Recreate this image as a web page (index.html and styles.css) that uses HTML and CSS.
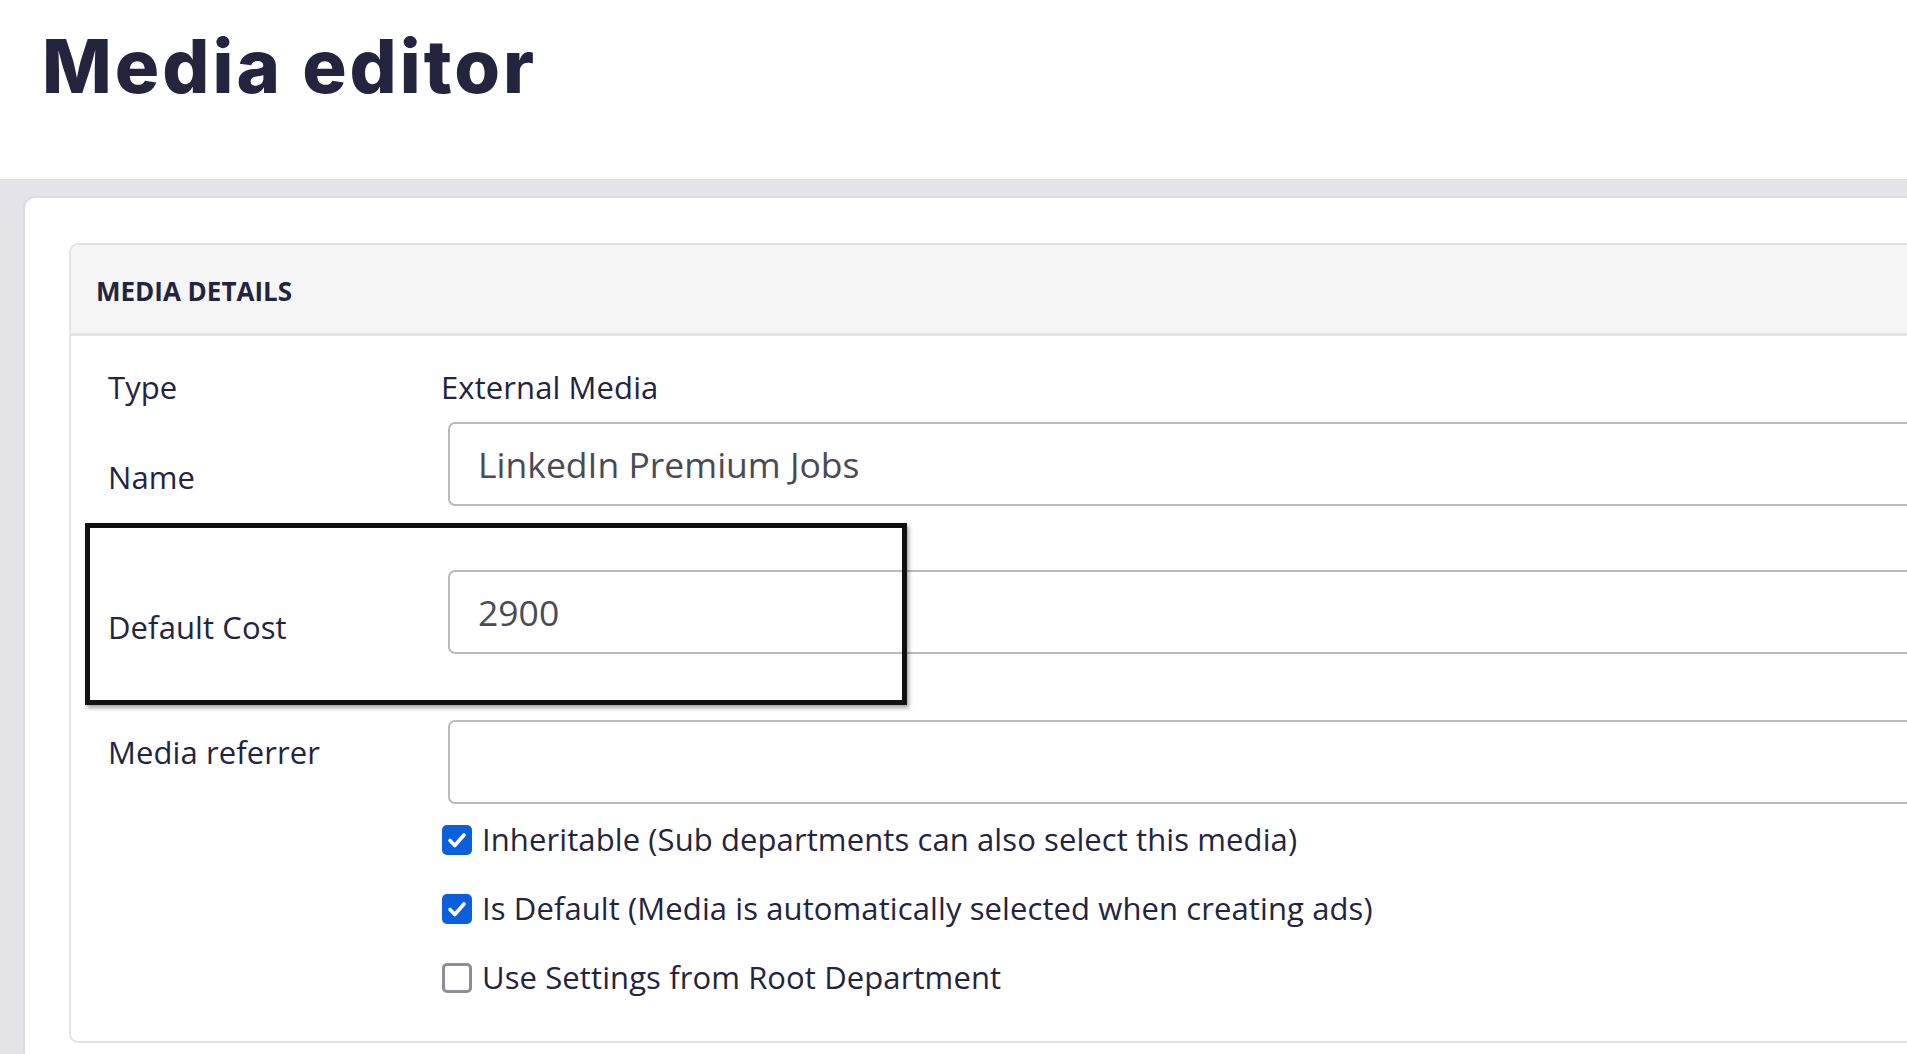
FILE: index.html
```html
<!DOCTYPE html>
<html lang="en">
<head>
<meta charset="utf-8">
<title>Media editor</title>
<link rel="stylesheet" href="styles.css">
</head>
<body>
<header class="page-header">
  <h1 class="page-title">Media editor</h1>
</header>
<main class="page-body">
  <section class="card">
    <div class="panel">
      <div class="panel-header">
        <h2 class="panel-title">MEDIA DETAILS</h2>
      </div>
      <div class="panel-body">
        <div class="form-row row-type">
          <span class="label">Type</span>
          <span class="value">External Media</span>
        </div>
        <div class="form-row row-name">
          <label class="label label-low" for="name">Name</label>
          <input class="text-input" id="name" type="text" value="LinkedIn Premium Jobs">
        </div>
        <div class="form-row row-cost">
          <div class="highlight"></div>
          <label class="label label-lower" for="cost">Default Cost</label>
          <input class="text-input" id="cost" type="text" value="2900">
        </div>
        <div class="form-row row-ref">
          <label class="label label-top" for="ref">Media referrer</label>
          <input class="text-input" id="ref" type="text" value="">
        </div>
        <div class="checks">
          <div class="check">
            <span class="box box-on"><svg viewBox="0 0 30 30" width="30" height="30"><polyline points="8,15.5 12.8,20.5 22,10" fill="none" stroke="#fff" stroke-width="3.6" stroke-linecap="round" stroke-linejoin="round"/></svg></span>
            <span class="check-text">Inheritable (Sub departments can also select this media)</span>
          </div>
          <div class="check">
            <span class="box box-on"><svg viewBox="0 0 30 30" width="30" height="30"><polyline points="8,15.5 12.8,20.5 22,10" fill="none" stroke="#fff" stroke-width="3.6" stroke-linecap="round" stroke-linejoin="round"/></svg></span>
            <span class="check-text">Is Default (Media is automatically selected when creating ads)</span>
          </div>
          <div class="check">
            <span class="box box-off"></span>
            <span class="check-text">Use Settings from Root Department</span>
          </div>
        </div>
      </div>
    </div>
  </section>
</main>
</body>
</html>
```

FILE: styles.css
```css
html, body {
  margin: 0;
  padding: 0;
}
body {
  overflow: hidden;
  background: #e4e4e9;
  font-family: "Open Sans", "Noto Sans", sans-serif;
  color: #24243e;
}
.page-header {
  background: #ffffff;
  height: 179px;
  box-sizing: border-box;
  padding: 29px 0 0 42px;
}
.page-title {
  margin: 0;
  font-family: Inter, "Liberation Sans", sans-serif;
  font-weight: 800;
  font-size: 74px;
  line-height: 74px;
  letter-spacing: 3px;
  color: #24243e;
}
.page-body {
  padding: 17px 0 0 23px;
}
.card {
  background: #ffffff;
  border: 2px solid #dcdce1;
  border-radius: 12px;
  margin-right: -400px;
  padding: 45px 44px 60px 44px;
}
.panel {
  border: 2px solid #e3e3e7;
  border-radius: 9px;
  overflow: hidden;
}
.panel-header {
  background: #f5f5f6;
  border-bottom: 3px solid #e3e3e7;
  padding: 28px 25px 24px 25px;
}
.panel-title {
  margin: 0;
  font-size: 26px;
  line-height: 36px;
  font-weight: 700;
  color: #24243e;
}
.panel-body {
  padding: 31px 0 43px 37px;
}
.form-row {
  display: grid;
  grid-template-columns: 333px 1fr;
  align-items: start;
  position: relative;
}
.label, .value, .check-text {
  font-size: 31px;
  line-height: 41px;
  letter-spacing: 0.1px;
  color: #24243e;
}
.label-low {
  padding-top: 35px;
}
.label-lower {
  padding-top: 37px;
}
.label-top {
  padding-top: 12px;
}
.row-name {
  margin-top: 14px;
}
.row-cost {
  margin-top: 64px;
}
.row-ref {
  margin-top: 66px;
}
.text-input {
  margin-left: 7px;
  height: 84px;
  box-sizing: border-box;
  border: 2px solid #b9b9c0;
  border-radius: 7px;
  padding: 0 28px;
  font-family: "Open Sans", "Noto Sans", sans-serif;
  font-size: 35.5px;
  color: #4a4a56;
  background: #fff;
  outline: none;
}
.highlight {
  position: absolute;
  left: -23px;
  top: -47px;
  width: 822px;
  height: 182px;
  box-sizing: border-box;
  border: 5px solid #111111;
  box-shadow: 2px 3px 4px rgba(0, 0, 0, 0.35);
  pointer-events: none;
  z-index: 2;
}
.checks {
  display: flex;
  flex-direction: column;
  gap: 28px;
  margin-top: 15px;
  padding-left: 334px;
}
.check {
  display: flex;
  align-items: center;
  gap: 10px;
}
.box {
  width: 30px;
  height: 30px;
  box-sizing: border-box;
  border-radius: 5px;
  display: flex;
  flex: none;
}
.box-on {
  background: #0b5fdc;
}
.box-off {
  background: #fff;
  border: 3px solid #8e8e9b;
}
```
